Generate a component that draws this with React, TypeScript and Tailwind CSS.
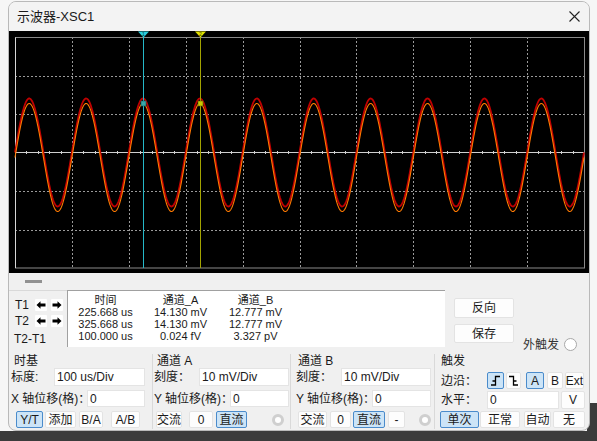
import React from 'react';

const F = "font-['Liberation_Sans','Noto_Sans_CJK_SC',sans-serif]";

function Btn({ cls, sel, children }: { cls: string; sel?: boolean; children?: React.ReactNode }) {
  return (
    <div
      className={`${cls} flex shrink-0 self-stretch items-center justify-center rounded-[2px] border text-[12px] leading-none text-[#1a1a1a] ${
        sel ? 'border-[#4a8bcb] bg-[#cce4f7]' : 'border-[#e3e3e3] bg-[#fdfdfd]'
      }`}
    >
      {children}
    </div>
  );
}

function Inp({ cls, children }: { cls: string; children?: React.ReactNode }) {
  return (
    <div className={`${cls} flex shrink-0 self-stretch items-center border border-[#e4e4e4] bg-white pl-[2px] text-[12px] leading-none text-[#1a1a1a]`}>
      {children}
    </div>
  );
}

function Radio() {
  return <div className="h-[12px] w-[12px] shrink-0 rounded-full border-[3px] border-[#cfcfcf] bg-white" />;
}

function wave(c: number, a: number) {
  let d = '';
  for (let x = 15; x <= 584; x += 0.5) {
    const y = c - a * Math.sin((2 * Math.PI * (x - 15)) / 56.9);
    d += (x === 15 ? 'M' : 'L') + x.toFixed(1) + ' ' + y.toFixed(2) + ' ';
  }
  return d;
}

function Scope() {
  const vx = Array.from({ length: 9 }, (_, i) => Math.round(15 + 56.9 * (i + 1)) + 0.5);
  const hy = [1, 2, 4, 5].map((i) => Math.round(37 + 38.5 * i) + 0.5);
  const ticks = Array.from({ length: 51 }, (_, k) => 15 + 11.38 * k);
  return (
    <svg width="580" height="242" viewBox="9 31 580 242" className="block">
      <rect x="9" y="31" width="580" height="242" fill="#000" />
      {vx.map((x) => (
        <line key={'v' + x} x1={x} y1={37} x2={x} y2={268} stroke="#9a9a9a" strokeWidth="1" strokeDasharray="2 2" />
      ))}
      {hy.map((y) => (
        <line key={'h' + y} x1={15} y1={y} x2={584} y2={y} stroke="#9a9a9a" strokeWidth="1" strokeDasharray="2 2" />
      ))}
      <line x1={15} y1={152.5} x2={584} y2={152.5} stroke="#cfcfcf" strokeWidth="1" />
      {ticks.map((x) => (
        <line key={'t' + x} x1={Math.round(x) + 0.5} y1={151} x2={Math.round(x) + 0.5} y2={154} stroke="#cfcfcf" strokeWidth="1" />
      ))}
      <rect x="15.5" y="37.5" width="569" height="230.5" fill="none" stroke="#8a8a8a" strokeWidth="1" />
      <line x1={15.5} y1={37.5} x2={15.5} y2={268} stroke="#d6d6d6" strokeWidth="1" />
      <path d={wave(152.5, 54)} fill="none" stroke="#c00000" strokeWidth="1.8" />
      <path d={wave(157.5, 54)} fill="none" stroke="#ff7a00" strokeWidth="1.1" />
      <line x1={143.5} y1={35} x2={143.5} y2={268} stroke="#25b8c8" strokeWidth="1" />
      <line x1={200.5} y1={35} x2={200.5} y2={268} stroke="#a3a300" strokeWidth="1" />
      <polygon points="138,31.5 149,31.5 143.5,37.5" fill="#2ccfdc" />
      <text x="143.5" y="36" fontSize="5" textAnchor="middle" fill="#044">1</text>
      <polygon points="195,31.5 206,31.5 200.5,37.5" fill="#e0e000" />
      <text x="200.5" y="36" fontSize="5" textAnchor="middle" fill="#440">2</text>
      <rect x="141" y="101" width="5" height="5" fill="#3aa6a6" stroke="#0a6060" strokeWidth="0.6" />
      <rect x="198" y="101" width="5" height="5" fill="#c8c800" stroke="#606000" strokeWidth="0.6" />
    </svg>
  );
}

function ArrowL() {
  return (
    <svg width="10" height="10" viewBox="0 0 10 10">
      <path d="M0.5 5 L4.5 1.2 V3.6 H9.5 V6.4 H4.5 V8.8 Z" fill="#000" />
    </svg>
  );
}
function ArrowR() {
  return (
    <svg width="10" height="10" viewBox="0 0 10 10">
      <path d="M9.5 5 L5.5 1.2 V3.6 H0.5 V6.4 H5.5 V8.8 Z" fill="#000" />
    </svg>
  );
}
function SmallBtn({ children }: { children: React.ReactNode }) {
  return <div className="flex h-[12px] w-[12px] items-center justify-center rounded-[1px] bg-white">{children}</div>;
}

export default function App() {
  return (
    <div className={`relative h-[441px] w-[597px] overflow-hidden bg-[#f6f6f6] ${F}`}>
      <div className="absolute right-0 top-[403px] h-[38px] w-[10px] bg-[#3b3b3b]" />
      <div className="absolute bottom-0 left-0 h-[10px] w-full bg-[#3b3b3b]" />
      <div className="absolute left-[8px] top-[1px] flex h-[430px] w-[582px] flex-col overflow-hidden rounded-[8px] border border-[#b9b9b9] bg-[#f0f0f0] text-[#1a1a1a]">
        {/* title bar */}
        <div className="flex h-[29px] shrink-0 items-center justify-between bg-[#f3f3f3] pl-[8px] pr-[9px]">
          <span className="text-[13px] leading-none text-[#1a1a1a]">示波器-XSC1</span>
          <svg width="11" height="11" viewBox="0 0 11 11">
            <path d="M0.5 0.5 L10.5 10.5 M10.5 0.5 L0.5 10.5" stroke="#222" strokeWidth="1.1" />
          </svg>
        </div>
        {/* scope */}
        <div className="h-[242px] shrink-0 bg-black">
          <Scope />
        </div>
        {/* handle */}
        <div className="h-[17px] shrink-0 pl-[16px] pt-[7px]">
          <div className="h-[3px] w-[17px] bg-[#919191]" />
        </div>
        {/* cursor row */}
        <div className="flex h-[57px] shrink-0">
          <div className="flex w-[58px] shrink-0 flex-col border-t border-[#d9d9d9] pl-[6px] pt-[7px] text-[12px] leading-none">
            <div className="flex h-[13px] items-center">
              <span className="w-[20px]">T1</span>
              <SmallBtn><ArrowL /></SmallBtn>
              <div className="w-[4px]" />
              <SmallBtn><ArrowR /></SmallBtn>
            </div>
            <div className="mt-[3px] flex h-[13px] items-center">
              <span className="w-[20px]">T2</span>
              <SmallBtn><ArrowL /></SmallBtn>
              <div className="w-[4px]" />
              <SmallBtn><ArrowR /></SmallBtn>
            </div>
            <div className="mt-[6px] -ml-[1px]">T2-T1</div>
          </div>
          <div className="w-[378px] shrink-0 border-l border-t border-[#a0a0a0] bg-white pt-[3px] text-[11px] leading-[12px] text-[#1a1a1a]">
            <div className="grid grid-cols-[75px_75px_75px] text-center">
              <div>时间</div>
              <div>通道_A</div>
              <div>通道_B</div>
              <div>225.668 us</div>
              <div>14.130 mV</div>
              <div>12.777 mV</div>
              <div>325.668 us</div>
              <div>14.130 mV</div>
              <div>12.777 mV</div>
              <div>100.000 us</div>
              <div>0.024 fV</div>
              <div>3.327 pV</div>
            </div>
          </div>
          <div className="ml-[9px] flex w-[60px] shrink-0 flex-col pt-[8px]">
            <Btn cls="h-[20px] w-[60px]">反向</Btn>
            <div className="h-[6px]" />
            <Btn cls="h-[19px] w-[60px]">保存</Btn>
          </div>
          <div className="ml-[9px] mt-[48px] flex h-[13px] items-center text-[12px] leading-none text-[#333]">
            <span>外触发</span>
            <div className="ml-[5px] h-[13px] w-[13px] rounded-full border border-[#a8a8a8] bg-white" />
          </div>
        </div>
        {/* bottom groups */}
        <div className="flex h-[82px] shrink-0 pt-[7px] text-[12px] leading-none">
          {/* 时基 */}
          <div className="flex w-[144px] shrink-0 flex-col border-r border-[#d9d9d9]">
            <div className="flex h-[14px] items-center pl-[5px]">时基</div>
            <div className="flex h-[18px] items-center">
              <span className="w-[45px] shrink-0 whitespace-nowrap pl-[2px]">标度:</span>
              <Inp cls="w-[91px]">100 us/Div</Inp>
            </div>
            <div className="mt-[4px] flex h-[17px] items-center">
              <span className="w-[78px] shrink-0 whitespace-nowrap pl-[2px]">X 轴位移(格)：</span>
              <Inp cls="w-[58px]">0</Inp>
            </div>
            <div className="mt-[4px] flex h-[17px] items-center">
              <Btn cls="ml-[7px] w-[27px]" sel>Y/T</Btn>
              <Btn cls="ml-[2px] w-[31px]">添加</Btn>
              <Btn cls="ml-[3px] w-[24px]">B/A</Btn>
              <Btn cls="ml-[8px] w-[29px]">A/B</Btn>
            </div>
          </div>
          {/* 通道 A */}
          <div className="flex w-[138px] shrink-0 flex-col border-r border-[#d9d9d9]">
            <div className="flex h-[14px] items-center pl-[4px]">通道 A</div>
            <div className="flex h-[18px] items-center">
              <span className="w-[46px] shrink-0 whitespace-nowrap pl-[1px]">刻度：</span>
              <Inp cls="w-[90px]">10 mV/Div</Inp>
            </div>
            <div className="mt-[4px] flex h-[17px] items-center">
              <span className="w-[77px] shrink-0 whitespace-nowrap pl-[1px]">Y 轴位移(格)：</span>
              <Inp cls="w-[59px]">0</Inp>
            </div>
            <div className="mt-[4px] flex h-[17px] items-center">
              <Btn cls="ml-[3px] w-[26px]">交流</Btn>
              <Btn cls="ml-[7px] w-[24px]">0</Btn>
              <Btn cls="ml-[3px] w-[31px]" sel>直流</Btn>
              <div className="ml-[25px]"><Radio /></div>
            </div>
          </div>
          {/* 通道 B */}
          <div className="flex w-[144px] shrink-0 flex-col border-r border-[#d9d9d9]">
            <div className="flex h-[14px] items-center pl-[7px]">通道 B</div>
            <div className="flex h-[18px] items-center">
              <span className="w-[50px] shrink-0 whitespace-nowrap pl-[5px]">刻度：</span>
              <Inp cls="w-[90px]">10 mV/Div</Inp>
            </div>
            <div className="mt-[4px] flex h-[17px] items-center">
              <span className="w-[81px] shrink-0 whitespace-nowrap pl-[5px]">Y 轴位移(格)：</span>
              <Inp cls="w-[59px]">0</Inp>
            </div>
            <div className="mt-[4px] flex h-[17px] items-center">
              <Btn cls="ml-[7px] w-[29px]">交流</Btn>
              <Btn cls="ml-[3px] w-[21px]">0</Btn>
              <Btn cls="ml-[2px] w-[32px]" sel>直流</Btn>
              <Btn cls="ml-[3px] w-[17px]">-</Btn>
              <div className="ml-[14px]"><Radio /></div>
            </div>
          </div>
          {/* 触发 */}
          <div className="flex flex-1 flex-col">
            <div className="flex h-[14px] items-center pl-[6px]">触发</div>
            <div className="mt-[4px] flex h-[17px] items-center">
              <span className="w-[52px] shrink-0 whitespace-nowrap pl-[6px]">边沿：</span>
              <Btn cls="w-[17px]" sel>
                <svg width="11" height="11" viewBox="0 0 11 11">
                  <path d="M1 10 H5.5 V1.5 H10 M2.5 6 H5.5" fill="none" stroke="#000" strokeWidth="1.3" />
                </svg>
              </Btn>
              <Btn cls="ml-[2px] w-[15px]">
                <svg width="11" height="11" viewBox="0 0 11 11">
                  <path d="M1 1.5 H5.5 V10 H10 M5.5 6 H8.5" fill="none" stroke="#000" strokeWidth="1.3" />
                </svg>
              </Btn>
              <Btn cls="ml-[5px] w-[18px]" sel>A</Btn>
              <Btn cls="ml-[3px] w-[16px]">B</Btn>
              <Btn cls="ml-[2px] w-[19px]">Ext</Btn>
            </div>
            <div className="mt-[2px] flex h-[18px] items-center">
              <span className="w-[52px] shrink-0 whitespace-nowrap pl-[6px]">水平：</span>
              <Inp cls="w-[72px]">0</Inp>
              <Btn cls="ml-[2px] w-[24px]">V</Btn>
            </div>
            <div className="mt-[2px] flex h-[17px] items-center">
              <Btn cls="ml-[5px] w-[39px]" sel>单次</Btn>
              <Btn cls="ml-[1px] w-[40px]">正常</Btn>
              <Btn cls="ml-[4px] w-[27px]">自动</Btn>
              <Btn cls="ml-[2px] w-[32px]">无</Btn>
            </div>
          </div>
        </div>
      </div>
    </div>
  );
}
